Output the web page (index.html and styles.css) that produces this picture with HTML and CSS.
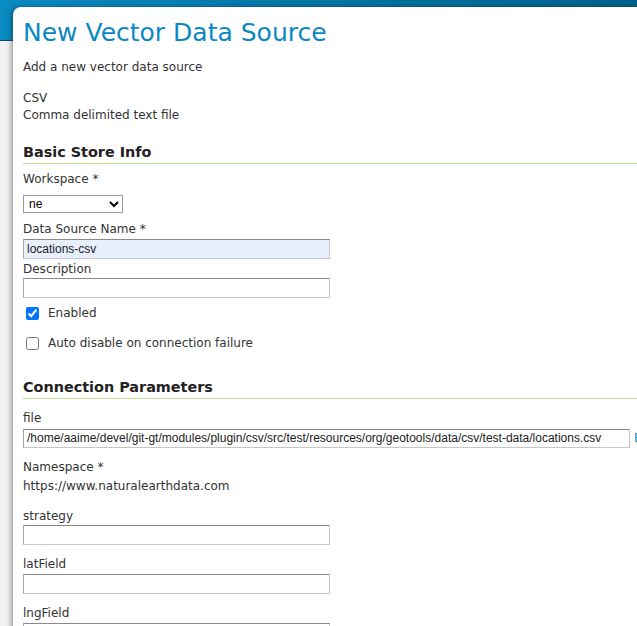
FILE: index.html
```html
<!DOCTYPE html>
<html>
<head>
<meta charset="utf-8">
<link rel="stylesheet" href="styles.css">
</head>
<body>
<div class="header"></div>
<div class="panel">
  <h1 class="title">New Vector Data Source</h1>
  <p class="intro">Add a new vector data source</p>
  <p class="type">CSV<br>Comma delimited text file</p>

  <h2 class="section first">Basic Store Info</h2>
  <label class="lbl lbl-ws">Workspace *</label>
  <select class="sel"><option>ne</option></select>
  <label class="lbl lbl-dsn">Data Source Name *</label>
  <input class="txt autofill" type="text" value="locations-csv">
  <label class="lbl lbl-desc">Description</label>
  <input class="txt txt-desc" type="text" value="">
  <div class="check check-enabled"><input type="checkbox" checked><span>Enabled</span></div>
  <div class="check check-auto"><input type="checkbox"><span>Auto disable on connection failure</span></div>

  <h2 class="section second">Connection Parameters</h2>
  <label class="lbl lbl-file">file</label>
  <div class="file-row">
    <input class="txt txt-file" type="text" value="/home/aaime/devel/git-gt/modules/plugin/csv/src/test/resources/org/geotools/data/csv/test-data/locations.csv">
    <a class="browse">Browse...</a>
  </div>
  <label class="lbl lbl-ns">Namespace *</label>
  <div class="ns-value">https://www.naturalearthdata.com</div>
  <label class="lbl lbl-param first-param">strategy</label>
  <input class="txt txt-param" type="text" value="">
  <label class="lbl lbl-param">latField</label>
  <input class="txt txt-param" type="text" value="">
  <label class="lbl lbl-param">lngField</label>
  <input class="txt txt-param" type="text" value="">
</div>
</body>
</html>
```

FILE: styles.css
```css
html, body {
  margin: 0;
  padding: 0;
  height: 100%;
  overflow: hidden;
}
body {
  background: linear-gradient(to right, #f2f2f2, #dcdcdc);
  font-family: "DejaVu Sans", Verdana, sans-serif;
  font-size: 12px;
  color: #333;
}
.header {
  height: 40px;
  background: linear-gradient(to right, #0a8bc2, #00628b);
  border-bottom: 1px solid #005277;
}
.panel {
  margin: -34px 0 0 13px;
  padding: 11px 0 0 10px;
  background: #fff;
  border-top-left-radius: 8px;
  box-shadow: -2px 0 5px rgba(0, 0, 0, 0.35);
  min-height: 700px;
  white-space: nowrap;
}
.title {
  margin: 0;
  font-size: 25px;
  line-height: 30px;
  font-weight: normal;
  color: #0b88c2;
}
.intro {
  margin: 11px 0 0;
  line-height: 16.8px;
}
.type {
  margin: 14px 0 0;
  line-height: 16.8px;
}
.section {
  margin: 0;
  font-size: 14.4px;
  line-height: 17px;
  font-weight: bold;
  color: #222;
  padding-bottom: 2px;
  border-bottom: 1px solid #c2de94;
}
.section.first { margin-top: 21px; }
.section.second { margin-top: 27.5px; }
.lbl {
  display: block;
  line-height: 16.8px;
  color: #333;
}
.lbl-ws { margin-top: 7px; }
.lbl-dsn { margin-top: 8px; }
.lbl-desc { margin-top: 2.5px; }
.lbl-file { margin-top: 10.5px; }
.lbl-ns { margin-top: 11px; }
.lbl-param { margin-top: 11.2px; }
.lbl-param.first-param { margin-top: 13.2px; }
.sel {
  display: block;
  margin-top: 7px;
  width: 100px;
  height: 18px;
  box-sizing: border-box;
  border: 1px solid #9a9a9a;
  border-radius: 0;
  background: #fff;
  font-family: "Liberation Sans", Arial, sans-serif;
  font-size: 12px;
  color: #000;
  padding: 0 0 0 1px;
}
.txt {
  display: block;
  box-sizing: border-box;
  width: 307px;
  height: 20px;
  margin: 1px 0 0;
  padding: 0 3px;
  border: 1px solid;
  border-color: #8a8a8a #c6c6c6 #c6c6c6 #a8a8a8;
  border-radius: 0;
  background: #fff;
  font-family: "Liberation Sans", Arial, sans-serif;
  font-size: 12px;
  color: #222;
  outline: none;
}
.autofill { background: #e8f0fe; }
.txt-desc { margin-top: 0; }
.check {
  display: flex;
  align-items: center;
  height: 16.8px;
  line-height: 16.8px;
}
.check input {
  margin: 0 9px 0 3px;
  width: 13px;
  height: 13px;
}
.check-enabled { margin-top: 6.5px; }
.check-auto { margin-top: 13.2px; }
.file-row {
  display: flex;
  align-items: center;
  margin-top: 2.3px;
}
.file-row .txt-file {
  width: 607px;
  height: 19px;
  margin: 0;
  flex: none;
}
.browse {
  margin-left: 4px;
  color: #0b88c2;
  font-size: 12px;
}
.ns-value {
  margin-top: 2.2px;
  line-height: 16.8px;
}
.txt-param { margin-top: 0.8px; }
```
